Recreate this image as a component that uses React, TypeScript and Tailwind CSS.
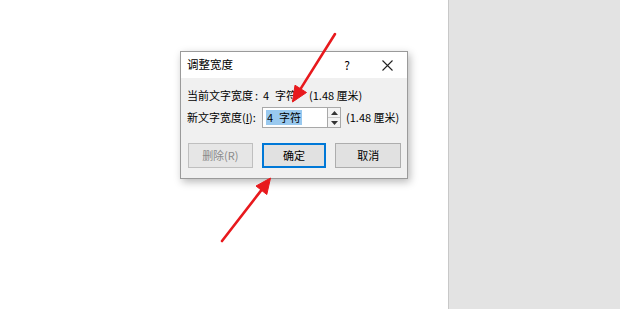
import React from "react";

const font = { fontFamily: '"Noto Sans CJK SC", "Noto Sans", sans-serif' };

function Spinner() {
  return (
    <div className="flex h-[21px] w-[13px] flex-col border border-l-0 border-[#a8a8a8] bg-white">
      <div className="flex h-[10px] items-center justify-center border-b border-[#c8c8c8] bg-[#f3f3f3]">
        <svg width="7" height="4" viewBox="0 0 7 4">
          <path d="M0 4 L3.5 0 L7 4 Z" fill="#333" />
        </svg>
      </div>
      <div className="flex flex-1 items-center justify-center bg-[#f3f3f3]">
        <svg width="7" height="4" viewBox="0 0 7 4">
          <path d="M0 0 L3.5 4 L7 0 Z" fill="#333" />
        </svg>
      </div>
    </div>
  );
}

function Chars() {
  return (
    <>
      4<span className="ml-[6px]">字符</span>
    </>
  );
}

function Dialog() {
  return (
    <div
      className="flex h-[128px] w-[228px] flex-col whitespace-nowrap border border-[#9a9a9a] bg-[#f0f0f0] text-[11px] text-black shadow-[2px_3px_8px_rgba(0,0,0,0.28)]"
      style={font}
    >
      <div className="flex h-[26px] items-center bg-white">
        <div className="flex-1 pl-[6px] text-[11.5px]">调整宽度</div>
        <div className="flex w-[40px] items-center justify-center text-[12px]">?</div>
        <div className="flex w-[40px] items-center justify-center">
          <svg width="11" height="11" viewBox="0 0 11 11">
            <path d="M0.5 0.5 L10.5 10.5 M10.5 0.5 L0.5 10.5" stroke="#222" strokeWidth="1.1" />
          </svg>
        </div>
      </div>

      <div className="flex flex-1 flex-col pl-[6px] pr-[6px] pt-[8px]">
        <div className="flex h-[18px] items-center">
          <div className="w-[75px]">
            当前文字宽度<span className="ml-[2px]">:</span>
          </div>
          <div className="w-[47px] pl-[1px]">
            <Chars />
          </div>
          <div>(1.48 厘米)</div>
        </div>

        <div className="mt-[3px] flex h-[21px] items-center">
          <div className="w-[75px]">
            新文字宽度(<span className="underline">I</span>):
          </div>
          <div className="flex h-[21px] w-[66px] items-center border border-[#a8a8a8] bg-white pl-[3px]">
            <span className="bg-[#99c9ef] px-[1px] leading-[15px]">
              <Chars />
            </span>
          </div>
          <Spinner />
          <div className="pl-[5px]">(1.48 厘米)</div>
        </div>

        <div className="mt-[15px] flex gap-[9px] pl-[1px]">
          <div className="flex h-[25px] w-[65px] items-center justify-center border border-[#bfbfbf] bg-[#e6e6e6] text-[#8a8a8a]">
            删除(R)
          </div>
          <div className="flex h-[25px] w-[65px] items-center justify-center border-2 border-[#0078d7] bg-[#e1e1e1]">
            确定
          </div>
          <div className="flex h-[25px] w-[66px] items-center justify-center border border-[#adadad] bg-[#e1e1e1]">
            取消
          </div>
        </div>
      </div>
    </div>
  );
}

function Arrows() {
  return (
    <svg className="pointer-events-none absolute left-0 top-0" width="620" height="309">
      <g fill="#e8191d" stroke="#e8191d">
        <line x1="335" y1="34" x2="300.4" y2="89.1" strokeWidth="2.6" strokeLinecap="round" />
        <path d="M292.5 102 L306.5 92.5 L295 85.2 Z" strokeWidth="1" strokeLinejoin="round" />
        <line x1="222" y1="241" x2="261.4" y2="190.1" strokeWidth="2.6" strokeLinecap="round" />
        <path d="M270.5 178 L266.8 194.5 L256 186 Z" strokeWidth="1" strokeLinejoin="round" />
      </g>
    </svg>
  );
}

export default function App() {
  return (
    <div className="relative flex h-[309px] w-[620px] overflow-hidden bg-white">
      <div className="w-[448px] pl-[180px] pt-[51px]">
        <Dialog />
      </div>
      <div className="flex-1 border-l border-[#c8c8c8] bg-[#e3e3e3]" />
      <Arrows />
    </div>
  );
}
